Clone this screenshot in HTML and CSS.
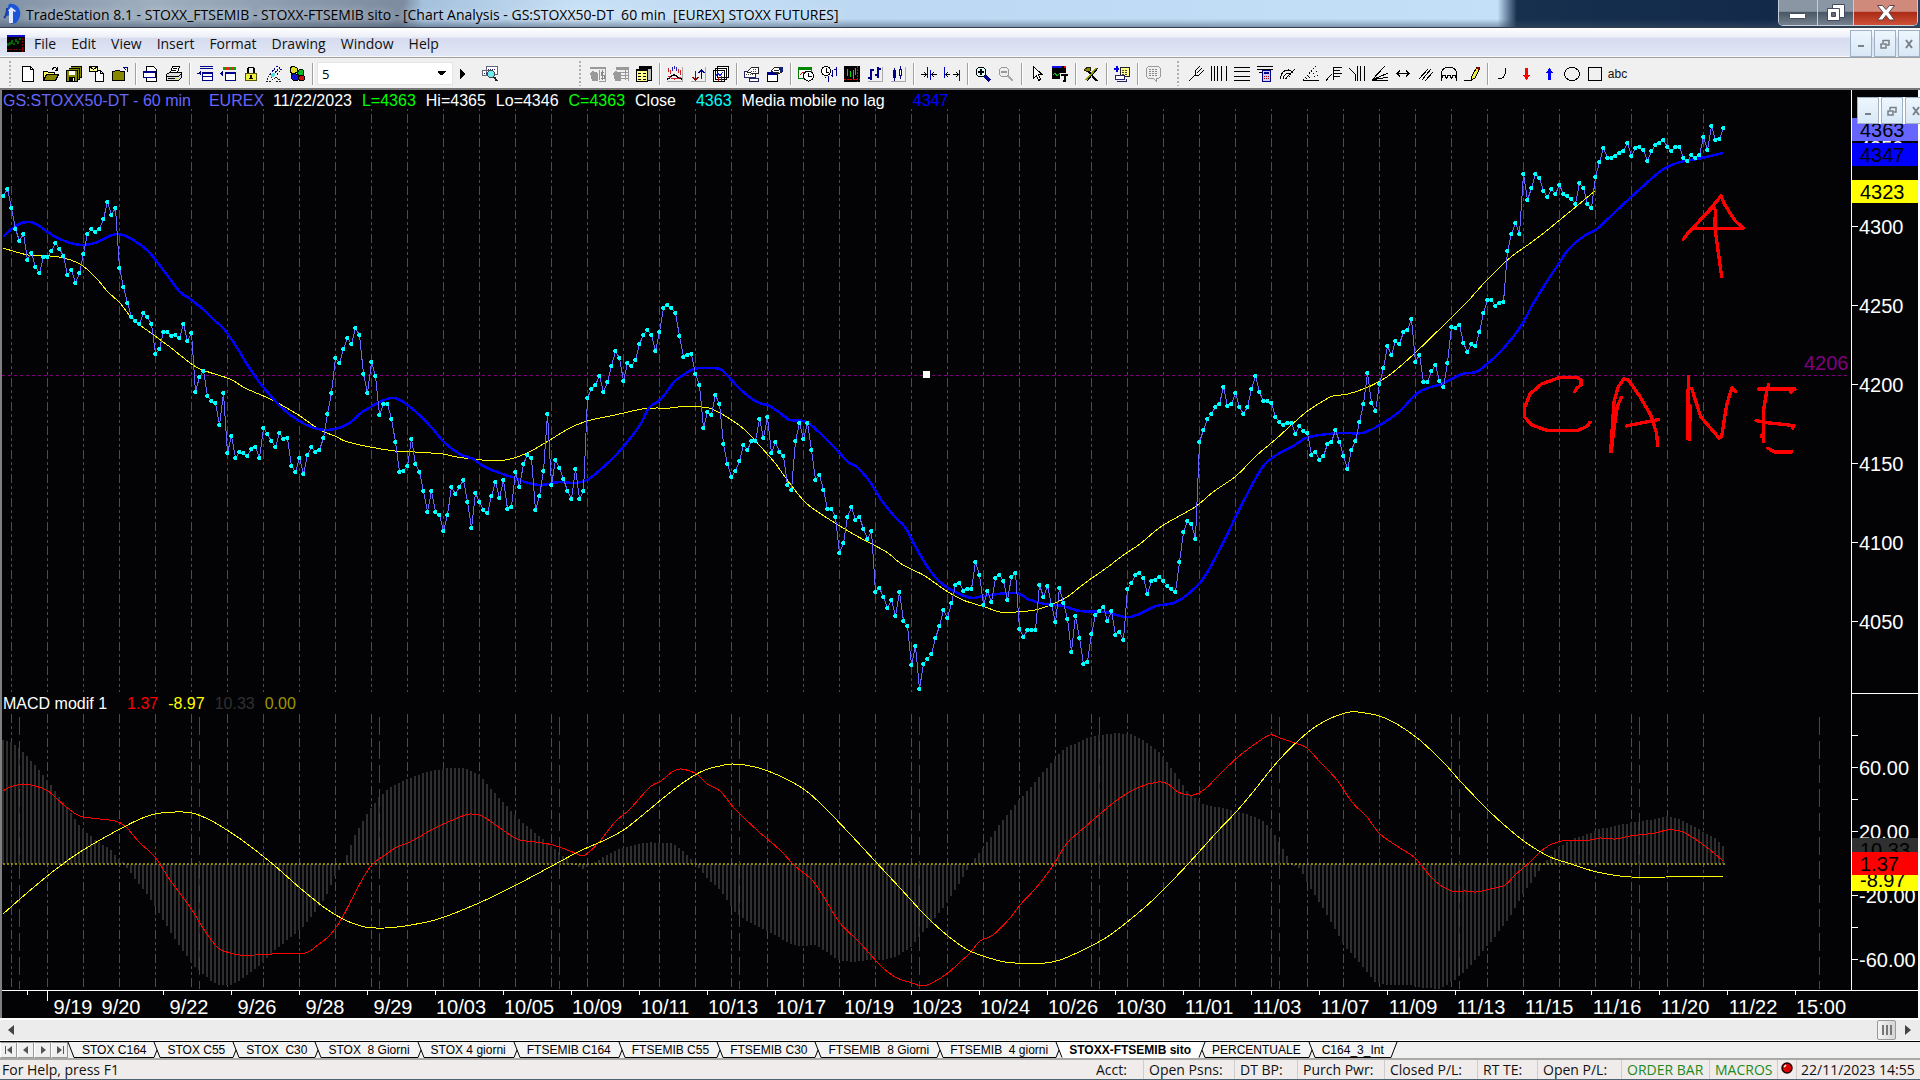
FILE: index.html
```html
<!DOCTYPE html>
<html lang="en">
<head>
<meta charset="utf-8">
<title>TradeStation 8.1</title>
<link rel="stylesheet" href="styles.css">
</head>
<body>
<header class="titlebar">
  <svg class="app-logo" width="18" height="22" viewBox="0 0 18 22"><path d="M6 1C11 0 16 3 17 8c1 5-1 9-4 12l-5 1V10L5 13 2 12z" fill="#1a55d8"/><path d="M5 8l3-4 5 4-1 1-2-1v12H6V8z" fill="#dfe9fb"/><path d="M1 15c2-2 3-6 3-10" stroke="#1a3c9a" stroke-width="2" fill="none"/></svg>
  <h1 class="title-text">TradeStation 8.1 - STOXX_FTSEMIB - STOXX-FTSEMIB sito - [Chart Analysis - GS:STOXX50-DT  60 min  [EUREX] STOXX FUTURES]</h1>
  <div class="caption-buttons">
    <button class="cap cap-min" aria-label="Minimize"><svg width="20" height="16"><rect x="1.500" y="8.500" width="16" height="5" rx="1" fill="#fff" stroke="#444b5c"/></svg></button>
    <button class="cap cap-max" aria-label="Restore"><svg width="20" height="20"><path d="M6.500 1.500h12v13h-12z" fill="#fff" stroke="#444b5c"/><path d="M1.500 5.500h12v12h-12z" fill="#fff" stroke="#444b5c"/><path d="M5.500 9.500h4v4h-4z" fill="#667" stroke="#444b5c"/></svg></button>
    <button class="cap cap-close" aria-label="Close"><svg width="20" height="18"><path d="M1.500 1.500h5l3.500 4 3.500-4h5l-5.500 7 5.500 7.500h-5l-3.500-4.500-3.500 4.500h-5L7 8.500z" fill="#fff" stroke="#5a4448"/></svg></button>
  </div>
</header>

<nav class="menubar">
  <svg class="doc-icon" width="18" height="17"><rect width="18" height="17" fill="#000"/><rect width="18" height="2" fill="#11c"/><path d="M1 11V8M3 10V7M5 9V5M7 8V10M9 7V4M11 6V9M13 5V3" stroke="#0c0"/><path d="M0 14.500h18M15.500 3v14" stroke="#800" stroke-dasharray="2 1"/></svg>
  <button>File</button><button>Edit</button><button>View</button><button>Insert</button><button>Format</button><button>Drawing</button><button>Window</button><button>Help</button>
  <div class="mdi-buttons">
    <button class="mdi" aria-label="Minimize chart"><svg width="10" height="10"><path d="M2 7h6" stroke="#777f88" stroke-width="2"/></svg></button>
    <button class="mdi" aria-label="Restore chart"><svg width="10" height="10"><path d="M3 1.500h6v4.500H7M3 1v3M1 5h5v4H1z" fill="none" stroke="#777f88" stroke-width="1.500"/></svg></button>
    <button class="mdi" aria-label="Close chart"><svg width="10" height="10"><path d="M2 1l6 8M8 1L2 9" stroke="#777f88" stroke-width="2"/></svg></button>
  </div>
</nav>

<div class="toolbar">
  <div class="tool-group">
    <span class="grip"></span>
    <button aria-label="New"><svg viewBox="0 0 16 16"><path d="M2.500.5h8l3 3v12h-11z" fill="#fff" stroke="#000"/><path d="M10.500.5v3h3" fill="none" stroke="#000"/></svg></button>
    <button aria-label="Open"><svg viewBox="0 0 16 16"><path d="M.5 14.500v-9h4l1 1h6v2" fill="#ff6" stroke="#000"/><path d="M.5 14.500l3-6h12l-3 6z" fill="#880" stroke="#000"/><path d="M9 3.500c2-3 4-2 5 0M14.500 1v3h-3" fill="none" stroke="#000"/></svg></button>
    <button aria-label="Save all"><svg viewBox="0 0 16 16"><path d="M4.500.5h11v11h-2M2.500 2.500h11v11h-2" fill="#880" stroke="#000"/><path d="M.5 4.500h11v11H.5z" fill="#880" stroke="#000"/><path d="M3 5h6v4H3z" fill="#fff"/><path d="M3 11h6v4H3z" fill="#000"/><path d="M7 12h1v3H7z" fill="#fff"/></svg></button>
    <button aria-label="Send"><svg viewBox="0 0 16 16"><path d="M6.500 4.500h5l3 3v8h-8z" fill="#fff" stroke="#000"/><path d="M.5.5h8v5h-8z" fill="#ff9" stroke="#000"/><path d="M.5.5l4 3 4-3" fill="none" stroke="#000"/><path d="M11.500 4.500v3h3" fill="none" stroke="#000"/></svg></button>
    <button aria-label="Close workspace"><svg viewBox="0 0 16 16"><path d="M.5 14.500v-9h2l1-1h4l1 1h4v9z" fill="#880" stroke="#000"/><path d="M15 6V1h-4M11 1l3 3" fill="none" stroke="#008"/></svg></button>
    <span class="sep"></span>
    <button aria-label="Print preview"><svg viewBox="0 0 16 16"><path d="M3.500.5h7l3 3v12h-10z" fill="#fff" stroke="#000"/><path d="M.5 5.500h12v6H.5z" fill="#fff" stroke="#008"/><path d="M1 5h11v2H1z" fill="#008"/></svg></button>
    <button aria-label="Print"><svg viewBox="0 0 16 16"><path d="M4.500 6.500l2-6h7l-2 6" fill="#fff" stroke="#000"/><path d="M.5 8.500l3-2h12v5l-3 3h-12z" fill="#ddd" stroke="#000"/><path d="M.5 10.500h12l3-3M2 12.500h9M7 2.500h4M6 4.500h4" fill="none" stroke="#000"/><path d="M9 12h2v1H9z" fill="#dd0"/></svg></button>
    <span class="sep"></span>
    <button aria-label="Insert window"><svg viewBox="0 0 16 16"><path d="M3 .5h13M3 2.500h13M5.500 6.500h10v8h-10z" fill="#fff" stroke="#008"/><path d="M5 6h11v2H5zM0 7h4v1H0z" fill="#008"/><path d="M1 7l3-2v5z" fill="#008"/><path d="M6 10h9" stroke="#008"/></svg></button>
    <button aria-label="Insert bar"><svg viewBox="0 0 16 16"><path d="M3 1h13v3H3z" fill="#0a0"/><path d="M6 1h3v3H6zM12 1h2v3h-2z" fill="#e22"/><path d="M5.500 6.500h10v8h-10z" fill="#fff" stroke="#008"/><path d="M5 6h11v2H5z" fill="#008"/><path d="M0 7.500l3-3v6z" fill="#008"/></svg></button>
    <button aria-label="Lock"><svg viewBox="0 0 16 16"><path d="M5 7V3.500C5 .5 11 .5 11 3.500V7" fill="none" stroke="#000" stroke-width="1.500"/><path d="M2.500 7.500h11v7h-11z" fill="#ee4" stroke="#550"/><path d="M7 9h2v2l1 2H6l1-2z" fill="#000"/></svg></button>
    <button aria-label="Scan"><svg viewBox="0 0 16 16"><path d="M1 14l3-6 3 6 3-3 5 4M0 15h6M10 15h6" fill="none" stroke="#222" stroke-dasharray="2 1"/><path d="M4 8l6-7M7 9l7-8M11 9l4-6M10 0l6 4" stroke="#008" stroke-dasharray="2 1"/><circle cx="7" cy="9" r="2" fill="#5dd"/></svg></button>
    <button aria-label="Shapes"><svg viewBox="0 0 16 16"><path d="M4 0l4 2v4L4 8 1 6V2z" fill="#dd2" stroke="#000"/><path d="M11 3l3 1v5l-4 1-2-3z" fill="#0b2" stroke="#020"/><path d="M5 7l4 2v5l-4 1-3-3V9z" fill="#11c" stroke="#000"/><path d="M11 9l4 1v4l-3 1-3-2z" fill="#c11" stroke="#000"/></svg></button>
    <span class="sep"></span>
    <select class="combo" aria-label="Interval"><option>5</option></select>
    <button class="go" aria-label="Go"><svg viewBox="0 0 16 16"><path d="M6 3l5 5-5 5z" fill="#000"/></svg></button>
    <button class="lookup" aria-label="Symbol lookup"><svg viewBox="0 0 16 16"><path d="M4.500.5h11v8h-11zM.5 4.500h7v5h-7z" fill="#fff" stroke="#667"/><path d="M6 3h8M2 7h4" stroke="#226" stroke-dasharray="1 1"/><circle cx="9" cy="8" r="3.500" fill="#6ee" stroke="#444"/><path d="M12 11l3 4" stroke="#222" stroke-width="2"/></svg></button>
  </div>
  <div class="tool-group second">
    <span class="grip"></span>
    <button aria-label="Account"><svg viewBox="0 0 16 16"><path d="M0 1h16v2H0zM0 7l3-2 5 2v8H2z" fill="#999"/><path d="M9 4v10M15 3v12H9" stroke="#999" fill="none"/><path d="M14 6h-3v3h3v3h-3M12.500 4v10" stroke="#888" fill="none"/></svg></button>
    <button aria-label="Orders"><svg viewBox="0 0 16 16"><path d="M3 1h13v3H3zM0 7l3-2 5 2v8H2z" fill="#999"/><path d="M4 6.500h12M8 9.500h8M8 12.500h8M12 4v10M15.500 4v11" stroke="#999" fill="none"/></svg></button>
    <button aria-label="Table"><svg viewBox="0 0 16 16"><path d="M3.500.5h12v14h-12z" fill="#bbb" stroke="#000"/><path d="M.5 3.500h11v12H.5z" fill="#ff8" stroke="#000"/><path d="M3 1.500h12M.5 4h11" stroke="#000" stroke-width="2"/><path d="M2 7.500h3M7 7.500h3M2 10.500h3M7 10.500h3M2 13.500h3M7 13.500h3" stroke="#000"/></svg></button>
    <span class="sep"></span>
    <button aria-label="Indicator"><svg viewBox="0 0 16 16"><path d="M15.500 1v14H0" stroke="#aaa" fill="none"/><path d="M1.500 2v4M3.500 4v4M11.500 3v4M13.500 4v5" stroke="#c22"/><path d="M5.500 1v4M7.500 0v3M9.500 1v4" stroke="#22a"/><path d="M0 13c3 0 4-4 7-4s4 4 8 4" stroke="#000" stroke-width="1.500" fill="none"/><path d="M1 10c4 4 8 4 13 1" stroke="#c22" fill="none"/></svg></button>
    <button aria-label="Strategy"><svg viewBox="0 0 16 16"><path d="M15.500 1v14H1" stroke="#aaa" fill="none"/><path d="M5.500 5v9M3 11l2.500 3L8 11" stroke="#800" fill="none" stroke-width="1.500"/><path d="M11.500 13V4M9 7l2.500-3L14 7" stroke="#008" fill="none" stroke-width="1.500"/></svg></button>
    <button aria-label="Charts"><svg viewBox="0 0 16 16"><path d="M4.500.5h11v11h-11zM2.500 2.500h11v11h-11zM.5 4.500h11v11H.5z" fill="#fff" stroke="#000"/><path d="M2 11l3-4 2 3 3-4" stroke="#22c" fill="none"/><path d="M5.500 11v4M8.500 10v5" stroke="#b00"/></svg></button>
    <span class="sep"></span>
    <button aria-label="Format window"><svg viewBox="0 0 16 16"><path d="M.5 5.500h11v6H.5zM5.500 12.500h9v3h-9z" fill="#fff" stroke="#226"/><path d="M3 6l5-5h6l1 6-4 1z" fill="#fff" stroke="#222"/><path d="M2 8h8M9 3h4M7 5h6" stroke="#444" stroke-dasharray="1 1"/></svg></button>
    <button aria-label="Properties"><svg viewBox="0 0 16 16"><path d="M.5 6.500h10v9H.5z" fill="#fff" stroke="#000"/><path d="M0 6h11v3H0z" fill="#008"/><path d="M4 5l4-4h7v5l-4 2z" fill="#fff" stroke="#222"/><path d="M12 1h4v5h-3z" fill="#127"/><path d="M7 4h5M9 6h3" stroke="#222"/></svg></button>
    <span class="sep"></span>
    <button aria-label="Session"><svg viewBox="0 0 16 16"><path d="M.5 2.500h13v10H.5z" fill="#fff" stroke="#070"/><path d="M0 1h14v3H0z" fill="#080"/><path d="M2 9l3-3 2 5" stroke="#c00" fill="none"/><circle cx="10.500" cy="10" r="5" fill="#fff" stroke="#000"/><path d="M10.500 7v3.500H14" stroke="#000" fill="none"/></svg></button>
    <button aria-label="Interval bars"><svg viewBox="0 0 16 16"><circle cx="5" cy="5" r="4.500" fill="#fff" stroke="#000"/><path d="M5.500 2v4H8M4 11l1 1M7 12l1 3" stroke="#000" fill="none"/><path d="M11.500 4v7M9.500 9h2M15.500 1v9M13 3h2M7.500 10v6" stroke="#008"/></svg></button>
    <button aria-label="Bar chart"><svg viewBox="0 0 16 16"><path d="M0 0h16v16H0z" fill="#000"/><path d="M3.500 3v7M6.500 5v6M9.500 4v9M11.500 2v7" stroke="#0d0"/><path d="M0 13.500h16M13.500 0v16" stroke="#e00" stroke-dasharray="2 1"/></svg></button>
    <button aria-label="OHLC bars"><svg viewBox="0 0 16 16"><path d="M15.500 1v14H1" stroke="#aaa" fill="none"/><path d="M4 3v11M1 12h3M4 4h3M11 1v11M8 9h3M11 3h3" stroke="#008" stroke-width="2"/></svg></button>
    <button aria-label="Candles"><svg viewBox="0 0 16 16"><path d="M15.500 1v14H1" stroke="#aaa" fill="none"/><path d="M4.500 2v13M10.500 0v13" stroke="#008"/><path d="M3 4h3v8H3z" fill="#008"/><path d="M9.500 3.500h2v6h-2z" fill="#fff" stroke="#008"/></svg></button>
    <span class="sep"></span>
    <button aria-label="Compress"><svg viewBox="0 0 16 16"><path d="M6.500 1v11M9.500 4v10" stroke="#00c"/><path d="M0 8.500h5M3 6l2 2.500L3 11M16 8.500h-5M13 6l-2 2.500 2 2.500" stroke="#000" fill="none"/></svg></button>
    <button aria-label="Expand"><svg viewBox="0 0 16 16"><path d="M.5 1v11M15.500 4v11" stroke="#00c"/><path d="M2 8.500h4M4 6L2 8.500 4 11M14 8.500H9M12 6l2 2.500-2 2.500" stroke="#000" fill="none"/></svg></button>
    <span class="sep"></span>
    <button aria-label="Zoom in"><svg viewBox="0 0 16 16"><circle cx="6" cy="6" r="5" fill="#dff" stroke="#000"/><path d="M6 3v6M3 6h6" stroke="#000" stroke-width="2"/><path d="M10 10l5 5" stroke="#008" stroke-width="3"/></svg></button>
    <button aria-label="Zoom out"><svg viewBox="0 0 16 16"><circle cx="6" cy="6" r="5" fill="#eee" stroke="#999"/><path d="M3 6h6" stroke="#999" stroke-width="2"/><path d="M10 10l5 5" stroke="#aaa" stroke-width="2"/></svg></button>
    <span class="sep"></span>
    <button aria-label="Pointer"><svg viewBox="0 0 16 16"><path d="M4.500.5v12l3-3 2 5 2-1-2-5h3.500z" fill="#fff" stroke="#000"/></svg></button>
    <button aria-label="Text tool"><svg viewBox="0 0 16 16"><path d="M0 0h14v13H0z" fill="#000"/><path d="M0 0h10v2H0z" fill="#11e"/><path d="M12 0h2v2h-2z" fill="#e00"/><path d="M1 9l2-2 2 3 3-3 2 2" stroke="#0c0" fill="none"/><path d="M8 7h8v9H8z" fill="#eee"/><path d="M9 9h7M12.500 9v7M11 15h3" stroke="#000" stroke-width="2"/></svg></button>
    <span class="sep"></span>
    <button aria-label="EasyLanguage"><svg viewBox="0 0 16 16"><path d="M1 4l4-3 3 1-1 3-2 1z" fill="#880" stroke="#220"/><path d="M5 5l9 10" stroke="#000" stroke-width="2"/><path d="M14 2L3 14" stroke="#990" stroke-width="2"/><path d="M15 2L4 15" stroke="#000"/></svg></button>
    <span class="sep"></span>
    <button aria-label="Add to workspace"><svg viewBox="0 0 16 16"><path d="M6.500 1.500h9v9h-9z" fill="#ff8" stroke="#222"/><path d="M8 4.500h6M8 6.500h6M8 8.500h6" stroke="#444" stroke-dasharray="2 1"/><path d="M0 3h5M2.500 0v6" stroke="#00d" stroke-width="2"/><path d="M1.500 9.500h9v4h-9z" fill="#fff" stroke="#226"/><path d="M3 15.500h9v-3" stroke="#226" fill="none"/></svg></button>
    <span class="sep"></span>
    <button aria-label="Notes"><svg viewBox="0 0 16 16"><path d="M3.500.5h10l2 2v8l-2 2h-2v3l-3-3h-5l-2-2v-8z" fill="#eee" stroke="#999"/><path d="M4 3.500h9M4 5.500h9M4 7.500h9M4 9.500h9" stroke="#888" stroke-dasharray="2 1"/></svg></button>
  </div>
  <div class="tool-group third">
    <span class="grip"></span>
    <button aria-label="Pitchfork"><svg viewBox="0 0 16 16"><path d="M1 15l6-6M7 9V5l5-5M7 9h4l5-5M9 7l5-5" stroke="#000" fill="none"/></svg></button>
    <button aria-label="Vertical lines"><svg viewBox="0 0 16 16"><path d="M.5 0v15M3.500 0v15M6.500 0v15M10.500 0v15M15.500 0v15" stroke="#000"/></svg></button>
    <button aria-label="Horizontal lines"><svg viewBox="0 0 16 16"><path d="M0 1.500h16M0 5.500h16M0 10.500h16M0 14.500h16" stroke="#000"/></svg></button>
    <button aria-label="Calculator"><svg viewBox="0 0 16 16"><path d="M0 .5h16M0 3.500h16M2 6.500h12" stroke="#000"/><path d="M5.500 4.500h8v11h-8z" fill="#ccf" stroke="#008"/><path d="M7 6h5v2H7z" fill="#008"/><path d="M7 10.500h6M7 12.500h6" stroke="#a00" stroke-dasharray="1 1"/></svg></button>
    <button aria-label="Arcs"><svg viewBox="0 0 16 16"><path d="M.5 13C1 3 10 2 13 7M3.500 13c0-6 6-7 7-4M6.500 13c0-3 3-4 3-2M5 13L15 3" stroke="#000" fill="none"/></svg></button>
    <button aria-label="Fan lines"><svg viewBox="0 0 16 16"><path d="M0 14.500h16" stroke="#000"/><path d="M0 14L13 0M0 14L15 5M0 14l15-5" stroke="#000" stroke-dasharray="1 2"/></svg></button>
    <button aria-label="Fibonacci"><svg viewBox="0 0 16 16"><path d="M0 14.500L6 8M7 14V1M7.500 1.500H16M7.500 4.500H14M7.500 7.500H16M7.500 10.500H14" stroke="#000"/></svg></button>
    <button aria-label="Time zones"><svg viewBox="0 0 16 16"><path d="M0 2l6 6V15M8.500 0v15M11.500 0v15M15.500 0v15" stroke="#000" fill="none"/></svg></button>
    <button aria-label="Gann fan"><svg viewBox="0 0 16 16"><path d="M0 14.500h16M0 14L13 0M0 14L16 7M0 14l16-3" stroke="#000"/></svg></button>
    <button aria-label="Extend"><svg viewBox="0 0 16 16"><path d="M2 7.500h12M5 4.500L2 7.500l3 3M11 4.500l3 3-3 3" stroke="#000" fill="none"/></svg></button>
    <button aria-label="Parallel lines"><svg viewBox="0 0 16 16"><path d="M1 13L10 3M4 14L13 3M7 15l8-9" stroke="#000"/></svg></button>
    <button aria-label="Cycle"><svg viewBox="0 0 16 16"><path d="M.5 15V7c0-8 15-8 15 0v8M.5 13c1-5 4-5 5 0 1-5 4-5 5 0 1-5 4-5 5 0" stroke="#000" fill="none"/></svg></button>
    <button aria-label="Trend line"><svg viewBox="0 0 16 16"><path d="M0 14.500h8" stroke="#000"/><path d="M7 14l1-4 5-9 3 1-5 10z" fill="#ee4" stroke="#000"/><path d="M13 1l3 1-1 2-3-1z" fill="#900"/></svg></button>
    <span class="sep"></span>
    <button aria-label="Arc"><svg viewBox="0 0 16 16"><path d="M3 13c5 0 8-3 8-11" stroke="#000" fill="none"/></svg></button>
    <button aria-label="Down arrow"><svg viewBox="0 0 16 16"><path d="M7 2h3v7h2l-3.500 5L5 9h2z" fill="#f00"/></svg></button>
    <button aria-label="Up arrow"><svg viewBox="0 0 16 16"><path d="M7 14h3V7h2L8.500 2 5 7h2z" fill="#00f"/></svg></button>
    <button aria-label="Ellipse"><svg viewBox="0 0 16 16"><ellipse cx="8" cy="8" rx="7.500" ry="6.500" stroke="#000" fill="none"/></svg></button>
    <button aria-label="Rectangle"><svg viewBox="0 0 16 16"><path d="M1.500 1.500h13v13h-13z" stroke="#000" fill="none"/></svg></button>
    <button class="text-tool">abc</button>
  </div>
</div>

<main class="chart">
  <div class="legend">
    <span class="c-violet">GS:STOXX50-DT - 60 min</span><span class="c-violet more">EUREX</span><span>11/22/2023</span><span class="c-green">L=4363</span><span>Hi=4365</span><span>Lo=4346</span><span class="c-green">C=4363</span><span>Close</span><span class="c-cyan wide">4363</span><span>Media mobile no lag</span><span class="c-blue wider">4347</span>
  </div>
  <div class="axis-head"></div>
  <svg class="plot price" id="price" viewBox="2 108 1849 585" preserveAspectRatio="none"></svg>
  <div class="axis price-axis" id="price-axis">
    <div class="floating-buttons">
      <button class="mdi" aria-label="Minimize pane"><svg width="10" height="10"><path d="M2 8h6" stroke="#777f88" stroke-width="2"/></svg></button>
      <button class="mdi" aria-label="Restore pane"><svg width="10" height="10"><path d="M3 1.500h6v4.500H7M3 1v3M1 5h5v4H1z" fill="none" stroke="#777f88" stroke-width="1.500"/></svg></button>
      <button class="mdi" aria-label="Close pane"><svg width="10" height="10"><path d="M2 1l6 8M8 1L2 9" stroke="#777f88" stroke-width="2"/></svg></button>
    </div>
  </div>
  <div class="legend lower">
    <span>MACD modif 1</span><span class="c-red wide">1.37</span><span class="c-yellow">-8.97</span><span class="c-dim">10.33</span><span class="c-olive">0.00</span>
  </div>
  <div class="axis-head ruled"></div>
  <svg class="plot macd" id="macd" viewBox="2 714 1849 276" preserveAspectRatio="none"></svg>
  <div class="axis macd-axis" id="macd-axis"></div>
  <div class="time-axis" id="time-axis"></div>
</main>

<div class="scrollbar">
  <button aria-label="Scroll left"><svg width="8" height="12"><path d="M7 1v10L1 6z" fill="#444"/></svg></button>
  <div class="track"><div class="thumb"><i></i><i></i><i></i></div></div>
  <button class="end" aria-label="Scroll right"><svg width="8" height="12"><path d="M1 1v10l6-5z" fill="#444"/></svg></button>
</div>

<div class="tabstrip">
  <div class="tab-nav">
    <button aria-label="First"><svg width="10" height="10"><path d="M1.500 1v8" stroke="#555"/><path d="M8 1v8L3 5z" fill="#555"/></svg></button>
    <button aria-label="Previous"><svg width="10" height="10"><path d="M7 1v8L2 5z" fill="#555"/></svg></button>
    <button aria-label="Next"><svg width="10" height="10"><path d="M3 1v8l5-4z" fill="#555"/></svg></button>
    <button aria-label="Last"><svg width="10" height="10"><path d="M8.500 1v8" stroke="#555"/><path d="M2 1v8l5-4z" fill="#555"/></svg></button>
  </div>
  <div class="tabs" id="tabs"></div>
</div>

<footer class="status">
  <span class="help">For Help, press F1</span>
  <span class="cell w-acct">Acct:</span><span class="cell w-psns">Open Psns:</span><span class="cell w-dtbp">DT BP:</span><span class="cell w-pwr">Purch Pwr:</span><span class="cell w-closed">Closed P/L:</span><span class="cell w-rt">RT TE:</span><span class="cell w-open">Open P/L:</span><span class="cell w-order c-on">ORDER BAR</span><span class="cell w-macros c-on">MACROS</span><span class="cell w-dot"><svg width="14" height="14"><circle cx="7" cy="7" r="5" fill="#d00" stroke="#200" stroke-width="1.500"/><path d="M4 6l2-2" stroke="#fff" stroke-width="1.500"/></svg></span><span class="cell w-clock">22/11/2023 14:55</span>
</footer>
<script src="chart.js"></script>
</body>
</html>
```
FILE: styles.css
```css
* { box-sizing: border-box; }
html { height: 100%; }
body {
  margin: 0;
  min-height: 100%;
  display: flex;
  flex-direction: column;
  overflow: hidden;
  background: #f0f0f0;
  color: #111;
  font: 14px/20px "Open Sans", "Noto Sans", sans-serif;
}
button { font: inherit; color: inherit; border: 0; padding: 0; margin: 0; background: none; display: flex; align-items: center; justify-content: center; }

/* title bar */
.titlebar {
  height: 28px;
  flex: none;
  display: flex;
  align-items: center;
  padding: 0 2px 0 3px;
  border-bottom: 1px solid #333c48;
  background:
    linear-gradient(180deg, transparent 70%, rgba(60, 80, 105, .5)),
    linear-gradient(90deg, #8292a5 0, #9fafc0 8%, #7c8b9e 21%, #a3c0dc 22%, #c8e0f5 30%, #bcd8f2 45%, #c4dff8 78%, #16304e 79%, #13294a 92%, #24405e 100%);
}
.app-logo { flex: none; }
.title-text {
  flex: 1;
  margin: 0 0 0 5px;
  padding-top: 2px;
  font: inherit;
  white-space: pre;
  color: #000;
  text-shadow: 0 0 8px rgba(255, 255, 255, .7);
}
.caption-buttons { align-self: flex-start; display: flex; height: 26px; border: 1px solid #c5ced8; border-top: 0; border-radius: 0 0 5px 5px; overflow: hidden; }
.cap { background: linear-gradient(#8a96a4 45%, #4a5765 50%, #75818e); border-right: 1px solid #c5ced8; }
.cap-min { width: 39px; }
.cap-max { width: 36px; }
.cap-close { width: 63px; border: 0; background: linear-gradient(#d08a7c 45%, #ab2b16 50%, #cf5138); }

/* menu */
.menubar {
  height: 29px;
  flex: none;
  display: flex;
  align-items: center;
  gap: 15px;
  padding: 3px 0 0 7px;
  background: linear-gradient(#fff 0, #eceef8 33%, #d6dcee 36%, #e2e7f6 100%);
  border-bottom: 1px solid #f8f8f8;
}
.doc-icon { margin-right: -6px; }
.mdi-buttons { margin-left: auto; display: flex; gap: 2px; }
.mdi { flex: none; width: 22px; height: 27px; border: 1px solid #9fb2c5; background: linear-gradient(#eef6fd, #d8e8f6); }

/* toolbar */
.toolbar {
  height: 33px;
  flex: none;
  display: flex;
  align-items: center;
  padding-top: 1px;
  background: #f0f0f0;
  border-top: 1px solid #a0a0a0;
  border-bottom: 2px solid #777;
}
.tool-group { display: flex; align-items: center; }
.tool-group button { width: 23px; height: 26px; flex: none; }
.tool-group svg { width: 16px; height: 16px; shape-rendering: crispEdges; }
.tool-group:first-child { width: 579px; padding-left: 9px; }
.tool-group.third { padding-left: 13px; }
.grip { width: 7px; height: 25px; flex: none; background: repeating-linear-gradient(#b0b0b0 0 2px, transparent 2px 4px) no-repeat left / 2px 100%; }
.sep { width: 8px; height: 22px; flex: none; background: linear-gradient(90deg, transparent 4px, #a0a0a0 4px 5px, #fff 5px 6px, transparent 6px); }
.combo {
  width: 136px;
  height: 23px;
  flex: none;
  margin-left: 1px;
  padding: 0 4px;
  border: 1px solid #e4e4e4;
  font: 13px/18px "Open Sans", sans-serif;
  appearance: none;
  background: linear-gradient(to bottom right, #000 50%, transparent 50%) no-repeat right 5px center / 5px 5px, linear-gradient(to bottom left, #000 50%, transparent 50%) no-repeat right 10px center / 5px 5px, #fff;
}
.tool-group .go { width: 17px; }
.tool-group .lookup { margin-left: 8px; }
.tool-group .text-tool { font: 12px/16px "Liberation Sans", Arial, sans-serif; }

/* chart */
.chart {
  flex: 1;
  display: grid;
  grid-template-columns: minmax(0, 1fr) 67px;
  grid-template-rows: 18px minmax(0, 585fr) 21px minmax(0, 276fr) 28px;
  background: #030305;
  border-left: 2px solid #808080;
  border-right: 2px solid #fff;
  font: 16px/18px "Liberation Sans", Arial, sans-serif;
  color: #fff;
}
.legend { display: flex; gap: 10px; align-items: center; padding: 3px 0 0 1px; white-space: pre; }
.legend.lower { padding-top: 1px; }
.more { margin-left: 8px; margin-right: -1px; }
.wide { margin-left: 10px; }
.wider { margin-left: 18px; }
.c-violet { color: #6666ff; }
.c-green { color: #0f0; }
.c-cyan { color: #0ff; }
.c-blue { color: #00f; }
.c-red { color: #f00; }
.c-yellow { color: #ff0; }
.c-dim { color: #303030; }
.c-olive { color: #a09600; }
.plot { width: 100%; height: 100%; display: block; overflow: visible; shape-rendering: crispEdges; }
.axis, .axis-head { border-left: 1px solid #fff; }
.axis-head.ruled { border-top: 1px solid #fff; }
.axis { position: relative; font-size: 20px; line-height: 22px; }
.macd-axis { overflow: hidden; }
.tick { position: absolute; left: 0; height: 22px; margin-top: -11px; padding-left: 7px; }
.tick::before { content: ""; position: absolute; left: 0; top: 10px; width: 6px; height: 1px; background: #fff; }
.tag { position: absolute; left: 0; right: 0; height: 23px; margin-top: -12px; padding-left: 8px; color: #000; line-height: 24px; }
.tag-last { background: #6666ff; }
.tag-media { background: #00f; }
.tag-curve, .tag-signal { background: #ff0; }
.tag-diff { background: #303030; }
.tag-macd { background: #f00; z-index: 1; }
.floating-buttons { position: absolute; z-index: 2; left: 5px; right: -2px; top: -11px; display: flex; gap: 2px; overflow: hidden; background: #fff; }
.time-axis { grid-column: 1 / -1; position: relative; border-top: 1px solid #fff; font-size: 20px; line-height: 22px; }
.time-label { position: absolute; top: 5px; transform: translateX(-50%); }
.time-tick { position: absolute; top: 0; width: 1px; height: 4px; background: #fff; }
.time-tick.day { height: 10px; }
.level { font: 20px "Liberation Sans", Arial, sans-serif; fill: #800080; }

/* horizontal scroll bar */
.scrollbar { height: 23px; flex: none; display: flex; background: #ececec; border-top: 2px solid #fff; border-bottom: 1px solid #fff; }
.scrollbar button { width: 22px; }
.scrollbar .end { width: 24px; }
.track { flex: 1; display: flex; justify-content: flex-end; }
.thumb { width: 19px; border: 1px solid #999; border-radius: 2px; background: linear-gradient(90deg, #f4f4f4, #d4d4d4); display: flex; align-items: center; justify-content: center; gap: 2px; }
.thumb i { width: 2px; height: 10px; background: #777; }

/* workbook tabs */
.tabstrip { height: 17px; flex: none; display: flex; background: #f0f0f0; border-top: 1px solid #000; font: 12px/14px "Liberation Sans", Arial, sans-serif; }
.tab-nav { display: flex; width: 68px; }
.tab-nav button { width: 17px; border: 1px solid #999; border-left-color: #fff; }
.tabs { display: flex; margin-left: -4px; }
.tab { border-bottom: 1px solid #000; padding: 0 3px 0 2px; white-space: pre; color: #000; background: #f4f4f4; }
.tab.active { font-weight: bold; background: #fff; border-bottom-color: #fff; }
.tab-edge { width: 16px; height: 16px; flex: none; }

/* status bar */
.status { height: 22px; flex: none; display: flex; align-items: stretch; background: #f0eceb; border-top: 2px solid #a8a8a8; border-bottom: 1px solid #4d6270; line-height: 20px; }
.help { flex: 1; padding-left: 2px; }
.cell { padding-left: 5px; border-left: 1px solid #d0cccb; white-space: pre; overflow: hidden; }
.w-acct { width: 52px; border: 0; }
.w-psns { width: 91px; }
.w-dtbp { width: 63px; }
.w-pwr { width: 87px; }
.w-closed { width: 93px; }
.w-rt { width: 60px; }
.w-open { width: 84px; }
.w-order { width: 88px; }
.w-macros { width: 68px; }
.w-dot { width: 19px; padding: 0 2px; }
.w-clock { width: 124px; padding-left: 4px; }
.c-on { color: #1d8a1d; }
```
FILE: chart.js
```js
// Hourly closes, one every 4 units from x = 3, as chart heights.
const closes = [
  196,189,208,229,241,234,260,253,267,273,257,257,251,243,249,256,275,270,283,273,254,234,229,232,229,219,202,215,208,268,287,303,317,321,324,313,317,324,354,349,332,332,336,335,338,324,341,333,392,377,371,396,401,403,425,393,453,436,458,452,453,456,449,447,458,428,434,441,447,433,439,438,466,472,458,474,455,447,452,450,438,414,393,358,363,349,338,344,328,335,374,393,362,376,415,404,404,419,442,472,471,466,439,464,472,491,512,491,512,515,531,515,487,494,487,480,502,528,493,502,510,513,496,482,498,480,509,507,472,487,464,455,458,510,496,471,414,485,460,468,479,491,499,469,499,491,398,389,385,376,392,382,366,351,358,381,363,366,360,344,
  335,330,335,351,332,308,305,308,313,336,357,355,354,374,385,428,412,415,395,404,444,464,477,471,461,445,450,441,441,419,438,417,453,442,452,456,485,490,441,423,439,423,450,480,475,490,509,509,517,553,543,517,507,520,517,529,539,531,592,588,597,608,600,616,592,621,626,665,646,689,664,659,654,638,626,610,618,603,585,583,591,589,589,562,575,605,591,602,578,575,581,600,577,573,629,637,630,630,630,585,597,586,605,622,588,603,619,652,616,638,664,662,634,615,611,607,621,611,635,632,640,589,583,575,573,
  578,594,581,580,577,581,586,589,592,562,532,521,524,539,442,430,419,414,407,404,387,406,404,393,407,414,407,389,376,392,401,401,403,417,422,425,423,423,434,426,431,433,455,452,460,456,444,442,430,442,456,469,450,441,422,404,373,403,411,384,368,346,355,341,344,332,330,319,362,355,382,382,371,365,381,387,363,327,328,325,343,352,344,346,332,313,300,300,306,303,302,251,234,223,234,
  174,200,188,174,178,191,197,189,194,185,194,196,199,204,183,188,204,208,177,162,148,158,158,156,153,151,143,156,148,147,150,161,151,145,143,140,147,151,147,147,158,161,155,158,155,137,150,126,140,139,128
];
const media = [3,237,8,232,19,224,28,222,36,224,54,236,70,243,82,245,95,243,112,235,119,234,130,238,147,250,158,263,170,279,180,292,190,299,204,310,214,320,224,329,236,346,250,369,264,388,282,408,299,421,314,428,327,430,342,427,352,421,361,413,374,405,384,400,392,398,400,400,415,411,432,428,445,443,460,454,473,459,485,467,500,473,515,478,525,482,540,485,560,482,575,483,587,480,600,470,613,458,624,446,640,425,649,408,661,399,675,381,685,374,693,369,705,368,720,369,727,375,738,387,752,399,762,404,768,405,780,413,790,420,803,421,812,426,823,436,835,448,848,462,857,467,870,482,882,501,895,517,905,527,913,542,925,563,937,579,948,588,960,594,972,598,990,595,1016,593,1030,600,1045,604,1063,606,1080,611,1105,612,1124,617,1134,616,1143,612,1156,606,1176,602,1197,586,1208,571,1225,539,1240,508,1260,471,1272,458,1293,446,1309,437,1340,433,1362,433,1380,425,1399,412,1419,392,1444,383,1462,374,1476,372,1487,364,1503,349,1521,326,1533,304,1544,286,1558,265,1568,250,1584,236,1597,229,1615,212,1640,189,1662,170,1680,162,1697,159,1723,153];
const curve = [3,248,28,255,50,256,64,258,78,263,88,270,98,280,108,292,120,303,130,316,140,325,155,336,170,347,185,359,200,369,230,379,245,388,268,398,285,407,300,416,320,430,335,436,345,441,365,446,395,451,415,452,443,454,457,457,482,460,505,460,525,454,545,443,568,429,587,421,615,415,642,409,658,408,663,409,678,407,702,407,712,409,730,419,745,430,760,446,775,463,788,481,805,502,824,516,855,535,872,544,888,553,900,563,913,570,925,576,945,590,963,600,985,607,1000,612,1016,612,1035,610,1050,605,1067,597,1085,583,1105,569,1125,554,1140,544,1162,526,1195,507,1213,492,1236,476,1256,456,1276,439,1305,413,1325,400,1333,396,1348,394,1366,388,1380,381,1391,374,1415,353,1452,317,1468,301,1487,280,1511,257,1540,236,1595,191];
const macdLine = [3,791,10,787,23,784,35,786,48,791,65,806,80,816,100,819,115,821,125,826,140,843,155,857,170,880,190,907,205,931,218,948,230,953,240,955,255,955,272,954,305,953,315,947,330,935,342,918,355,893,370,867,385,855,397,847,410,842,435,828,460,817,470,814,482,816,500,828,517,839,535,842,553,845,575,853,582,856,588,853,600,841,615,822,630,809,650,787,661,781,672,772,680,769,690,771,698,775,707,784,720,791,735,809,758,831,780,850,795,866,812,880,825,899,840,923,860,943,880,965,895,977,912,983,922,986,932,983,948,973,960,962,970,953,980,941,993,935,1010,918,1020,905,1035,889,1050,870,1060,854,1068,842,1085,827,1100,814,1117,800,1137,788,1158,782,1168,784,1178,792,1193,795,1205,789,1220,774,1238,757,1255,744,1270,735,1280,738,1295,743,1307,748,1320,762,1337,780,1352,802,1367,817,1380,834,1400,848,1415,858,1430,876,1440,885,1452,891,1465,891,1476,892,1490,889,1505,885,1515,875,1530,862,1545,848,1562,841,1590,840,1600,838,1615,839,1630,836,1655,833,1667,830,1680,831,1692,837,1705,846,1715,854,1723,861];
const signal = [3,914,20,899,40,882,60,866,80,852,100,840,120,829,140,819,155,814,175,812,192,813,210,820,230,832,250,846,275,866,300,888,325,908,345,920,365,927,385,928,405,926,435,920,460,911,490,898,520,883,550,867,580,851,605,840,625,829,650,809,672,791,690,778,705,770,720,766,733,764,755,767,780,776,805,790,825,808,850,834,875,861,900,888,925,915,948,936,970,951,1000,961,1015,963,1045,963,1060,960,1085,949,1110,935,1144,908,1167,886,1189,863,1216,833,1236,812,1253,792,1279,760,1307,733,1327,720,1345,713,1358,712,1385,718,1416,737,1443,762,1461,782,1488,810,1510,830,1528,844,1550,857,1568,863,1593,871,1613,875,1631,877,1666,877,1684,876,1723,877];
const diff = [3,740,10,741,18,747,28,757,45,777,60,798,80,826,95,840,110,849,118,858,124,863,130,872,150,898,165,923,180,947,195,967,210,980,218,985,232,985,245,977,260,965,275,950,290,938,305,925,325,898,335,876,345,860,355,835,368,812,380,796,392,786,410,778,430,771,450,768,465,768,480,776,500,799,520,820,540,837,560,853,570,862,583,869,600,859,610,853,625,847,650,842,660,843,672,843,682,850,690,858,695,863,705,876,720,890,735,912,750,923,770,932,790,944,800,946,815,945,825,951,840,961,855,962,870,960,885,960,895,957,910,948,925,930,945,905,960,882,972,862,985,845,1000,824,1015,805,1035,782,1050,764,1065,748,1085,739,1100,735,1115,733,1130,734,1145,741,1160,753,1175,773,1190,795,1205,805,1225,808,1240,812,1260,819,1270,827,1278,840,1288,858,1292,864,1300,869,1310,887,1330,920,1345,947,1360,963,1375,982,1385,985,1410,985,1425,988,1440,989,1455,980,1470,966,1490,943,1510,917,1525,891,1535,877,1545,862,1555,850,1570,840,1585,835,1600,829,1620,825,1630,823,1650,820,1668,816,1680,819,1690,824,1705,833,1715,838,1723,846];

// Smooth path through flat x,y pairs.
function smooth(a) {
  const n = a.length / 2;
  const p = i => { const k = Math.max(0, Math.min(n - 1, i)); return [a[2 * k], a[2 * k + 1]]; };
  let d = `M${a[0]} ${a[1]}`;
  for (let i = 0; i < n - 1; i++) {
    const [x0, y0] = p(i - 1), [x1, y1] = p(i), [x2, y2] = p(i + 1), [x3, y3] = p(i + 2);
    d += `C${x1 + (x2 - x0) / 6} ${y1 + (y2 - y0) / 6} ${x2 - (x3 - x1) / 6} ${y2 - (y3 - y1) / 6} ${x2} ${y2}`;
  }
  return d;
}
function valueAt(a, x) {
  for (let i = 0; i < a.length - 2; i += 2)
    if (x <= a[i + 2]) return a[i + 1] + (a[i + 3] - a[i + 1]) * (x - a[i]) / (a[i + 2] - a[i]);
  return a[a.length - 1];
}
const path = (d, stroke, width, extra = '') =>
  `<path d="${d}" fill="none" stroke="${stroke}" stroke-width="${width}" ${extra}/>`;

function grid(top, bottom, offset) {
  let d = '';
  for (let x = 11.5; x < 1710; x += 36) d += `M${x} ${top}V${bottom}`;
  return path(d, '#4c4c4c', 1, `stroke-dasharray="9 3 3 3 3 3" stroke-dashoffset="${offset}"`);
}

let dots = '';
closes.forEach((y, i) => {
  const x = 3 + 4 * i;
  dots += `M${x - 1} ${y - 2}h3v4h-3zM${x - 2} ${y - 1}h1v2h-1z`;
});
const closeLine = 'M' + closes.map((y, i) => `${3.5 + 4 * i} ${y}`).join('L');

const notes = [
  'M285 905L290 895 303 885 303 870 290 862 240 862 185 882 150 912 133 955 133 980 155 1005 200 1021 293 1021 320 1010 330 997',
  'M392 1085L402 935 415 890 432 867 445 870 480 920 512 975 530 1030 533 1067M394 1085L400 1030 412 950 424 922M440 1008L535 989',
  'M625 860L623 1045M631 948L628 1048M635 895L662 980 718 1045 725 1040 740 945 756 893 767 904',
  'M836 897H945L932 907M866 883L860 905 851 960 850 1055M828 992L860 998 942 1007 938 1015M845 1035v5M864 1075L885 1086H936',
  'M610 448L625 428 680 370 723 318 735 345 765 392 790 415H638M625 428L700 350 706 360 705 415 725 560'
].join('');

document.getElementById('price').innerHTML =
  grid(109, 692, 19) +
  path('M2 375.5H1848', '#800080', 1, 'stroke-dasharray="3 3"') +
  path(smooth(curve), '#ff0', 1) +
  path(smooth(media), '#00f', 2.5) +
  path(closeLine, '#6666ff', 1) +
  `<path d="${dots}" fill="#0ff"/>` +
  '<rect x="923" y="371" width="7" height="7" fill="#fff"/>' +
  '<text class="level" x="1804" y="370">4206</text>' +
  `<g transform="translate(1480 90) scale(.3333)">${path(notes, '#f00', 10, 'stroke-linecap="round" stroke-linejoin="round"')}</g>`;

let bars = '';
for (let x = 3; x <= 1723; x += 4) bars += `M${x} 864V${Math.round(valueAt(diff, x))}`;
let cycles = '';
for (let x = 19.5; x < 1850; x += 180) cycles += `M${x} 717V989`;
document.getElementById('macd').innerHTML =
  grid(714, 987, 0) +
  path(bars, '#2e2e2e', 2) +
  path('M3 864H1725', '#8f8600', 2, 'stroke-dasharray="2 2"') +
  path(cycles, '#006464', 1, 'stroke-dasharray="18 6"') +
  path(smooth(macdLine), '#f00', 1) +
  path(smooth(signal), '#ff0', 1);

function fillAxis(id, top, height, ticks, tags) {
  const pos = y => `top:${((y - top) / height * 100).toFixed(3)}%`;
  let html = ticks.map(([y, t]) => `<span class="tick" style="${pos(y)}">${t}</span>`).join('');
  html += tags.map(([y, t, c]) => `<span class="tag ${c}" style="${pos(y)}">${t}</span>`).join('');
  document.getElementById(id).insertAdjacentHTML('afterbegin', html);
}
fillAxis('price-axis', 108, 585,
  [[148, '4350'], [227, '4300'], [306, '4250'], [385, '4200'], [464, '4150'], [543, '4100'], [622, '4050']],
  [[130, '4363', 'tag-last'], [155, '4347', 'tag-media'], [192, '4323', 'tag-curve']]);
fillAxis('macd-axis', 714, 276,
  [[736, ''], [768, '60.00'], [800, ''], [832, '20.00'], [896, '-20.00'], [928, ''], [960, '-60.00']],
  [[850, '10.33', 'tag-diff'], [880, '-8.97', 'tag-signal'], [864, '1.37', 'tag-macd']]);

const dates = ['9/22','9/26','9/28','9/29','10/03','10/05','10/09','10/11','10/13','10/17','10/19','10/23','10/24','10/26','10/30','11/01','11/03','11/07','11/09','11/13','11/15','11/16','11/20','11/22','15:00'];
const left = x => `left:${((x - 2) / 1916 * 100).toFixed(3)}%`;
let time = `<i class="time-tick" style="${left(27)}"></i><i class="time-tick day" style="${left(47)}"></i>` +
  `<span class="time-label" style="${left(73)}">9/19</span><span class="time-label" style="${left(121)}">9/20</span>`;
dates.forEach((t, i) => {
  time += `<i class="time-tick" style="${left(163 + 68 * i)}"></i><span class="time-label" style="${left(189 + 68 * i)}">${t}</span>`;
});
document.getElementById('time-axis').innerHTML = time;

// Workbook tabs: each edge is shared by two neighbours.
const names = ['STOX C164','STOX C55','STOX  C30','STOX  8 Giorni','STOX 4 giorni','FTSEMIB C164','FTSEMIB C55','FTSEMIB C30','FTSEMIB  8 Giorni','FTSEMIB  4 giorni','STOXX-FTSEMIB sito','PERCENTUALE','C164_3_Int'];
const active = 10;
const edge = (d, left, right) => `<svg class="tab-edge" viewBox="0 0 16 16"><path d="M0 0h7l2 8-4 7.500H0z" fill="${left}"/><path d="M6 0h10v15.500h-5z" fill="${right}"/><path d="${d}" fill="none" stroke="#000"/></svg>`;
let tabs = edge('M4 0L10 15.500H16', 'none', '#f4f4f4');
names.forEach((t, i) => {
  tabs += `<button class="tab${i === active ? ' active' : ''}">${t}</button>`;
  if (i === names.length - 1) tabs += edge('M0 15.500H4L10 0', '#f4f4f4', 'none');
  else if (i === active) tabs += edge('M5 15.500L11 0M8 8L11 15.500H16', '#fff', '#f4f4f4');
  else if (i === active - 1) tabs += edge('M0 15.500H5L8 8M5 0L11 15.500', '#f4f4f4', '#fff');
  else tabs += edge('M0 15.500H5L8 8M5 0L11 15.500H16', '#f4f4f4', '#f4f4f4');
});
document.getElementById('tabs').innerHTML = tabs;
```
